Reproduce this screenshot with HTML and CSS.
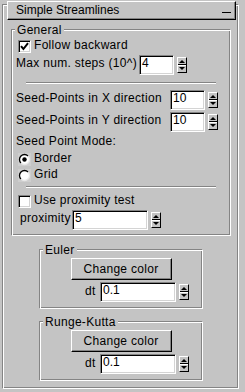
FILE: index.html
```html
<!DOCTYPE html>
<html lang="en">
<head>
<meta charset="utf-8">
<title>Simple Streamlines</title>
<link rel="stylesheet" href="styles.css">
</head>
<body>
<div class="panel">
  <div class="panel-title"><span class="panel-name">Simple Streamlines</span><span class="collapse"></span></div>

  <div class="group group-general">
    <div class="group-label">General</div>

    <div class="option-row option-row-tall">
      <span class="checkbox"><svg width="9" height="9" viewBox="0 0 9 9"><path d="M1 4.2L3.4 7L8 1.2" stroke="#000" stroke-width="2" fill="none"/></svg></span>
      <span class="option-text">Follow backward</span>
    </div>

    <div class="field-row">
      <span class="field-label label-steps">Max num. steps (10^)</span>
      <span class="entry entry-short">4</span>
      <span class="spin"></span>
    </div>

    <hr class="sep sep-first">

    <div class="field-row field-row-seed">
      <span class="field-label label-seed">Seed-Points in X direction</span>
      <span class="entry entry-short">10</span>
      <span class="spin"></span>
    </div>
    <div class="field-row field-row-next">
      <span class="field-label label-seed">Seed-Points in Y direction</span>
      <span class="entry entry-short">10</span>
      <span class="spin"></span>
    </div>

    <div class="mode-label">Seed Point Mode:</div>

    <div class="option-row option-row-first">
      <span class="radio"><svg width="13" height="13" viewBox="0 0 13 13"><circle cx="6.5" cy="6.5" r="5" fill="#fff"/><path d="M2.96 10.04A5 5 0 0 1 10.04 2.96" stroke="#000" stroke-width="1.3" fill="none"/><path d="M10.04 2.96A5 5 0 0 1 2.96 10.04" stroke="#e8e8e8" stroke-width="1.3" fill="none"/><circle cx="6.5" cy="6.5" r="2.2" fill="#000"/></svg></span>
      <span class="option-text">Border</span>
    </div>
    <div class="option-row">
      <span class="radio"><svg width="13" height="13" viewBox="0 0 13 13"><circle cx="6.5" cy="6.5" r="5" fill="#fff"/><path d="M2.96 10.04A5 5 0 0 1 10.04 2.96" stroke="#000" stroke-width="1.3" fill="none"/><path d="M10.04 2.96A5 5 0 0 1 2.96 10.04" stroke="#e8e8e8" stroke-width="1.3" fill="none"/></svg></span>
      <span class="option-text">Grid</span>
    </div>

    <hr class="sep sep-second">

    <div class="option-row option-row-proximity">
      <span class="checkbox"></span>
      <span class="option-text">Use proximity test</span>
    </div>

    <div class="field-row field-row-proximity">
      <span class="field-label label-proximity">proximity</span>
      <span class="entry entry-wide">5</span>
      <span class="spin"></span>
    </div>
  </div>

  <div class="group group-method group-euler">
    <div class="group-label">Euler</div>
    <div class="button">Change color</div>
    <div class="field-row field-row-dt">
      <span class="field-label label-dt">dt</span>
      <span class="entry entry-wide">0.1</span>
      <span class="spin"></span>
    </div>
  </div>

  <div class="group group-method group-runge">
    <div class="group-label">Runge-Kutta</div>
    <div class="button">Change color</div>
    <div class="field-row field-row-dt">
      <span class="field-label label-dt">dt</span>
      <span class="entry entry-wide">0.1</span>
      <span class="spin"></span>
    </div>
  </div>
</div>
</body>
</html>
```

FILE: styles.css
```css
* {
  box-sizing: border-box;
}

body {
  margin: 0;
  width: 245px;
  height: 392px;
  overflow: hidden;
  background: #c4c4c4;
  color: #000;
  font-family: "Liberation Sans", Arial, sans-serif;
  font-size: 12px;
  letter-spacing: 0.3px;
}

/* etched (groove) frame */
.panel,
.group {
  border: 1px solid;
  border-color: #848484 #fff #fff #848484;
  box-shadow: inset 1px 1px 0 #fff, inset -1px -1px 0 #848484;
}

.panel {
  width: 237px;
  margin: 4px 0 0 2px;
  padding: 0 1px 7px 4px;
}

.panel-title {
  display: flex;
  align-items: center;
  justify-content: space-between;
  width: 229px;
  height: 19px;
  margin-top: -4px;
  padding: 0 4px 0 8px;
  background: #c4c4c4;
  border: 1px solid;
  border-color: #fff #000 #000 #fff;
  box-shadow: inset -1px -1px 0 #848484;
  line-height: 17px;
  letter-spacing: 0;
}

.collapse {
  width: 9px;
  height: 1px;
  margin-top: 4px;
  background: #000;
}

.group-label {
  width: fit-content;
  margin: -7px 0 0 3px;
  padding: 0 2px;
  line-height: 14px;
  background: #c4c4c4;
}

.group-general {
  width: 220px;
  margin: 9px 0 0 4px;
  padding-bottom: 5px;
}

.group-method {
  width: 164px;
  margin: 13px 0 0 32px;
  padding-bottom: 6px;
}

.group-runge {
  margin-top: 12px;
}

/* check & radio rows */
.option-row {
  display: flex;
  align-items: center;
  height: 16px;
  padding-left: 6px;
}

.option-row-tall {
  height: 18px;
}

.option-row-first {
  margin-top: 3px;
}

.option-row-proximity {
  margin-top: 5px;
}

.option-text {
  margin-bottom: 2px;
  line-height: 14px;
}

.checkbox {
  display: flex;
  align-items: center;
  justify-content: center;
  width: 13px;
  height: 13px;
  margin-right: 3px;
  background: #fff;
  border: 1px solid;
  border-color: #848484 #fff #fff #848484;
  box-shadow: inset 1px 1px 0 #000, inset -1px -1px 0 #d4d4d4;
}

.radio {
  display: flex;
  width: 13px;
  height: 13px;
  margin-right: 3px;
  background: #cecece;
}

/* label + entry + spinner rows */
.field-row {
  display: flex;
  align-items: flex-start;
  height: 20px;
  padding-left: 4px;
}

.field-row-seed {
  margin-top: 6px;
}

.field-row-next {
  margin-top: 2px;
}

.field-row-proximity {
  margin-top: 1px;
  padding-left: 8px;
}

.field-row-dt {
  margin-top: 2px;
  padding-left: 45px;
}

.field-label {
  flex-shrink: 0;
  margin-top: 1px;
  line-height: 14px;
  white-space: nowrap;
}

.label-steps {
  width: 123px;
}

.label-seed {
  width: 154px;
}

.label-proximity {
  width: 52px;
}

.label-dt {
  width: 15px;
  margin-top: 2px;
}

.entry {
  height: 20px;
  padding: 1px 2px 0;
  line-height: 12px;
  background: #fff;
  border: 1px solid;
  border-color: #848484 #fff #fff #848484;
  box-shadow: inset 1px 1px 0 #000, inset -1px -1px 0 #d4d4d4;
  letter-spacing: 0;
}

.entry-short {
  width: 35px;
}

.entry-wide {
  width: 76px;
}

.spin {
  position: relative;
  align-self: center;
  width: 10px;
  height: 16px;
  margin-left: 3px;
  border: 1px solid;
  border-color: #fff #000 #000 #fff;
  background: linear-gradient(#000, #000) 0 6px / 100% 1px no-repeat,
    linear-gradient(#fff, #fff) 0 7px / 100% 1px no-repeat, #c4c4c4;
}

.spin::before,
.spin::after {
  content: "";
  position: absolute;
  left: 1px;
  width: 0;
  height: 0;
  border-left: 3px solid transparent;
  border-right: 3px solid transparent;
}

.spin::before {
  top: 2px;
  border-bottom: 3px solid #000;
}

.spin::after {
  top: 9px;
  border-top: 3px solid #000;
}

.sep {
  height: 2px;
  margin: 7px 14px 0;
  border: 0;
  border-top: 1px solid #848484;
  border-bottom: 1px solid #fff;
}

.sep-second {
  margin-top: 3px;
}

.mode-label {
  margin-top: 2px;
  padding-left: 4px;
  line-height: 14px;
}

.button {
  display: flex;
  align-items: center;
  justify-content: center;
  width: 101px;
  height: 22px;
  margin: 1px auto 0;
  border: 1px solid;
  border-color: #fff #000 #000 #fff;
  box-shadow: inset -1px -1px 0 #848484;
}
```
